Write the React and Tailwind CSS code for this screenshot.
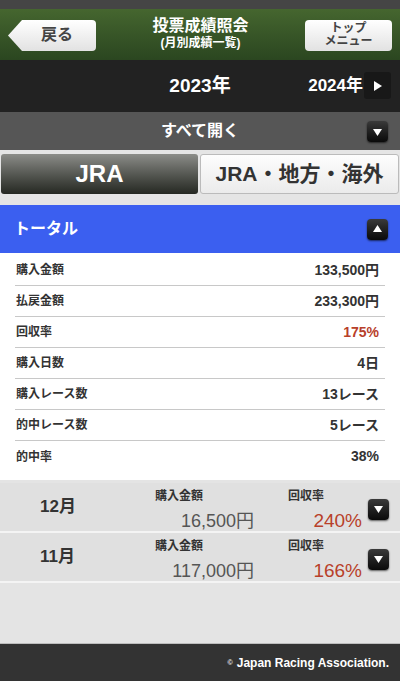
import React from 'react';

const font = { fontFamily: '"Liberation Sans", "Noto Sans CJK JP", sans-serif' };

function IconBtn({ dir = 'down' }) {
  return (
    <div className="w-[21px] h-[21px] rounded-[4px] bg-gradient-to-b from-[#3a3a3a] to-[#0a0a0a] shadow-[0_1px_2px_rgba(0,0,0,0.6)] flex items-center justify-center">
      <svg width="9" height="8" viewBox="0 0 9 8">
        {dir === 'down' ? (
          <polygon points="0,1 9,1 4.5,8" fill="#fff" />
        ) : (
          <polygon points="0,7 9,7 4.5,0" fill="#fff" />
        )}
      </svg>
    </div>
  );
}

const totals = [
  ['購入金額', '133,500円'],
  ['払戻金額', '233,300円'],
  ['回収率', '175%', true],
  ['購入日数', '4日'],
  ['購入レース数', '13レース'],
  ['的中レース数', '5レース'],
  ['的中率', '38%'],
];

const months = [
  { m: '12月', amount: '16,500円', rate: '240%' },
  { m: '11月', amount: '117,000円', rate: '166%' },
];

export default function App() {
  return (
    <div className="w-[400px] h-[681px] flex flex-col bg-[#e4e4e4] overflow-hidden" style={font}>
      {/* Header */}
      <div className="h-[9px] bg-[#454545]" />
      <div className="h-[51px] bg-gradient-to-b from-[#45662f] to-[#2b4620] flex items-center justify-between px-[8px] pt-[1px]">
        <div className="relative w-[88px] h-[31px] flex items-center justify-center pl-[10px]">
          <svg className="absolute inset-0" width="88" height="31" viewBox="0 0 88 31">
            <defs>
              <linearGradient id="bg1" x1="0" y1="0" x2="0" y2="1">
                <stop offset="0" stopColor="#ffffff" />
                <stop offset="1" stopColor="#e2e2e2" />
              </linearGradient>
            </defs>
            <path d="M0 15.5 L14 0 H84 Q88 0 88 4 V27 Q88 31 84 31 H14 Z" fill="url(#bg1)" />
          </svg>
          <span className="relative text-[16px] font-bold text-[#444]">戻る</span>
        </div>
        <div className="flex flex-col items-center text-white font-bold leading-none">
          <span className="text-[16px] -mt-[4px]">投票成績照会</span>
          <span className="text-[12px] mt-[3px]">(月別成績一覧)</span>
        </div>
        <div className="w-[87px] h-[31px] rounded-[4px] bg-gradient-to-b from-[#ffffff] to-[#e2e2e2] flex flex-col items-center justify-center text-[#444] text-[12px] font-bold leading-[13px]">
          <span>トップ</span>
          <span>メニュー</span>
        </div>
      </div>

      {/* Year bar */}
      <div className="h-[52px] bg-[#222] flex items-center relative">
        <div className="flex-1 text-center text-white font-bold text-[19px]">2023年</div>
        <div className="absolute right-[9px] top-[12px] flex items-center">
          <span className="text-white font-bold text-[17px] mr-[1px]">2024年</span>
          <div className="w-[27px] h-[27px] rounded-[3px] bg-[#181818] flex items-center justify-center">
            <svg width="8" height="10" viewBox="0 0 8 10">
              <polygon points="0,0 8,5 0,10" fill="#fff" />
            </svg>
          </div>
        </div>
      </div>

      {/* Open all */}
      <div className="h-[38px] bg-[#565656] flex items-center justify-center relative">
        <span className="text-white font-bold text-[16px]">すべて開く</span>
        <div className="absolute right-[12px] top-[9px]">
          <IconBtn />
        </div>
      </div>

      {/* Tabs */}
      <div className="h-[55px] bg-[#e5e5e5] flex pt-[4px] px-[1px] gap-[2px]">
        <div className="flex-1 h-[40px] rounded-[3px] bg-gradient-to-b from-[#8c8d89] to-[#262923] flex items-center justify-center text-white font-bold text-[24px]">
          JRA
        </div>
        <div className="flex-1 h-[40px] rounded-[3px] border border-[#bbb] bg-gradient-to-b from-[#fdfdfd] to-[#ebebeb] flex items-center justify-center text-[#333] font-bold text-[21px]">
          JRA・地方・海外
        </div>
      </div>

      {/* Total */}
      <div className="h-[48px] bg-[#3b5ff0] flex items-center justify-between pl-[14px] pr-[12px]">
        <span className="text-white font-bold text-[16px]">トータル</span>
        <IconBtn dir="up" />
      </div>
      <div className="bg-white pt-[2px] pb-[8px] px-[15px]">
        {totals.map(([k, v, red], i) => (
          <div
            key={k}
            className={`h-[31px] flex items-center justify-between pl-[1px] pr-[6px] ${i < totals.length - 1 ? 'border-b border-[#c8c8c8]' : ''}`}
          >
            <span className="text-[12px] font-bold text-[#333]">{k}</span>
            <span className={`text-[14px] font-bold ${red ? 'text-[#b8402a]' : 'text-[#333]'}`}>{v}</span>
          </div>
        ))}
      </div>

      {/* Months */}
      <div className="pt-[3px]">
        {months.map((r) => (
          <div key={r.m} className="h-[50px] bg-[#e0e0e0] border-b-2 border-[#f4f4f4] flex items-start">
            <div className="w-[115px] self-center pl-[40px] text-[17px] font-bold text-[#333]">{r.m}</div>
            <div className="w-[139px] flex flex-col pt-[6px]">
              <span className="pl-[40px] text-[12px] font-bold text-[#333] leading-[14px]">購入金額</span>
              <span className="text-right text-[18px] text-[#555] leading-[22px] mt-[7px]">{r.amount}</span>
            </div>
            <div className="w-[108px] flex flex-col pt-[6px]">
              <span className="pl-[34px] text-[12px] font-bold text-[#333] leading-[14px]">回収率</span>
              <span className="text-right text-[19px] text-[#b8402a] leading-[22px] mt-[7px]">{r.rate}</span>
            </div>
            <div className="ml-[6px] self-center mt-[4px]">
              <IconBtn />
            </div>
          </div>
        ))}
      </div>

      <div className="flex-1" />

      {/* Footer */}
      <div className="h-[38px] bg-[#333] border-t border-[#bdbdbd] flex items-center justify-end pr-[11px]">
        <span className="text-white font-bold text-[12px]">
          <span className="text-[7px] align-middle mr-[4px]">©</span>Japan Racing Association.
        </span>
      </div>
    </div>
  );
}
